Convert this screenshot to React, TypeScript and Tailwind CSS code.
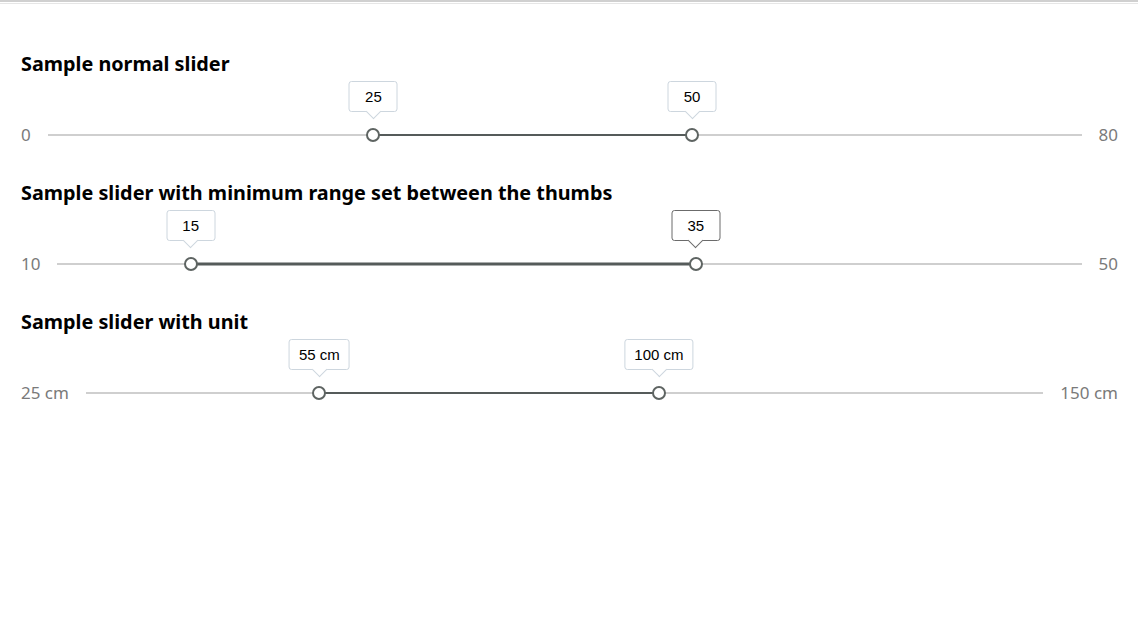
import React from "react";

type SliderProps = {
  min: number;
  max: number;
  values: [number, number];
  unit?: string;
  thick?: boolean;
  activeTip?: number;
};

const Tip = ({label, active}: {label: string; active?: boolean}) => (
  <div className="absolute bottom-[23px] left-1/2 -translate-x-1/2">
    <div
      className={
        "relative min-w-[49px] rounded-[3px] border bg-white px-[9px] text-center text-[15px] leading-[29px] whitespace-nowrap text-black " +
        (active ? "border-[#6b6b6b]" : "border-[#cdd6de]")
      }
      style={{fontFamily: '"Liberation Sans", Arial, sans-serif'}}
    >
      {label}
      <div
        className={
          "absolute -bottom-[6px] left-1/2 h-[11px] w-[11px] -translate-x-1/2 rotate-45 border-r border-b bg-white " +
          (active ? "border-[#6b6b6b]" : "border-[#cdd6de]")
        }
      />
    </div>
  </div>
);

const RangeSlider = ({min, max, values, unit, thick, activeTip}: SliderProps) => {
  const fmt = (v: number) => (unit ? `${v} ${unit}` : `${v}`);
  const pct = (v: number) => ((v - min) / (max - min)) * 100;
  const [a, b] = values;

  return (
    <div className="flex h-5 items-center gap-[17px] text-[17px] text-[#7a7a7a]">
      <span className="leading-5">{fmt(min)}</span>
      <div className="flex h-[2px] flex-1 items-center bg-[#cfcfcf] px-[7px]">
        <div className="relative h-0 flex-1">
          <div
            className={
              "absolute top-1/2 -translate-y-1/2 bg-[#555b5a] " +
              (thick ? "h-[3px]" : "h-[2px]")
            }
            style={{left: `${pct(a)}%`, width: `${pct(b) - pct(a)}%`}}
          />
          {[a, b].map((v, i) => (
            <div key={i} className="absolute top-0" style={{left: `${pct(v)}%`}}>
              <div className="absolute top-0 left-0 h-[14px] w-[14px] -translate-x-1/2 -translate-y-1/2 rounded-full border-2 border-[#5e6462] bg-white" />
              <Tip label={fmt(v)} active={activeTip === i} />
            </div>
          ))}
        </div>
      </div>
      <span className="leading-5">{fmt(max)}</span>
    </div>
  );
};

export default function App() {
  return (
    <div
      className="min-h-[625px] w-full bg-white"
      style={{fontFamily: '"Noto Sans", "Open Sans", sans-serif'}}
    >
      <div className="h-[2px] bg-[#d0d0d0]" />
      <div className="mt-px h-px bg-[#e6e6e6]" />

      <div className="flex flex-col px-[21px] pt-[46px] pr-[20px]">
        <h2 className="text-[19.8px] leading-7 font-bold text-black">Sample normal slider</h2>
        <div className="mt-[47px]">
          <RangeSlider min={0} max={80} values={[25, 50]} />
        </div>

        <h2 className="mt-[34px] text-[19.8px] leading-7 font-bold text-black">
          Sample slider with minimum range set between the thumbs
        </h2>
        <div className="mt-[47px]">
          <RangeSlider min={10} max={50} values={[15, 35]} thick activeTip={1} />
        </div>

        <h2 className="mt-[34px] text-[19.8px] leading-7 font-bold text-black">Sample slider with unit</h2>
        <div className="mt-[47px]">
          <RangeSlider min={25} max={150} values={[55, 100]} unit="cm" />
        </div>
      </div>
    </div>
  );
}
